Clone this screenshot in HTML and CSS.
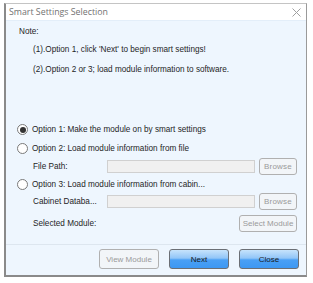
FILE: index.html
```html
<!DOCTYPE html>
<html lang="en">
<head>
    <meta charset="UTF-8">
    <title>Smart Settings Selection</title>
    <link rel="stylesheet" href="styles.css">
</head>
<body>
    <div class="dialog">
        <div class="title-bar">
            <span class="title">Smart Settings Selection</span>
            <svg class="close-icon" width="9" height="9" viewBox="0 0 9 9">
                <path d="M0.5 0.5 L8.5 8.5 M8.5 0.5 L0.5 8.5" stroke="#a0a0a0" stroke-width="1" fill="none"/>
            </svg>
        </div>

        <div class="content">
            <div class="note">Note:</div>
            <div class="note-line first">(1).Option 1, click 'Next' to begin smart settings!</div>
            <div class="note-line second">(2).Option 2 or 3; load module information to software.</div>

            <div class="options">
                <div class="row opt1">
                    <span class="radio checked"></span>
                    <span>Option 1: Make the module on by smart settings</span>
                </div>
                <div class="row opt2">
                    <span class="radio"></span>
                    <span>Option 2: Load module information from file</span>
                </div>
                <div class="row sub file-row">
                    <span class="label">File Path:</span>
                    <span class="field"></span>
                    <button class="btn-disabled browse">Browse</button>
                </div>
                <div class="row opt3">
                    <span class="radio"></span>
                    <span>Option 3: Load module information from cabin...</span>
                </div>
                <div class="row sub cabinet-row">
                    <span class="label">Cabinet Databa...</span>
                    <span class="field"></span>
                    <button class="btn-disabled browse">Browse</button>
                </div>
                <div class="row sub module-row">
                    <span class="label">Selected Module:</span>
                    <button class="btn-disabled select-module">Select Module</button>
                </div>
            </div>
        </div>

        <div class="footer">
            <button class="btn-disabled view-module">View Module</button>
            <button class="btn-blue">Next</button>
            <button class="btn-blue">Close</button>
        </div>
    </div>
</body>
</html>
```

FILE: styles.css
```css
* {
    box-sizing: border-box;
    margin: 0;
    padding: 0;
}

body {
    background: #ffffff;
    font-family: "Liberation Sans", Arial, sans-serif;
    font-size: 8.2px;
    color: #1e1e1e;
    padding: 3px 0 0 4px;
}

.dialog {
    width: 303px;
    height: 274px;
    border-top: 1px solid #c4c4c4;
    border-left: 2px solid #8a8a8a;
    border-right: 1px solid #9a9a9a;
    border-bottom: 2px solid #8a8a8a;
    background: #eef6fe;
    display: flex;
    flex-direction: column;
}

.title-bar {
    height: 17px;
    background: #ffffff;
    display: flex;
    align-items: center;
    justify-content: space-between;
    padding: 0 5px 0 3px;
    border-bottom: 1px solid #e3eef9;
}

.title {
    font-family: "Open Sans", "Liberation Sans", sans-serif;
    font-size: 8.8px;
    color: #727272;
}

.close-icon {
    display: block;
}

.content {
    height: 224px;
    padding: 2px 0 0 13px;
    border-bottom: 1px solid #dde6ef;
}

.note {
    height: 18px;
    line-height: 18px;
}

.note-line {
    height: 17px;
    line-height: 17px;
    padding-left: 14px;
}

.note-line.second {
    margin-top: 3px;
}

.options {
    margin-top: 42px;
}

.row {
    display: flex;
    align-items: center;
}

.opt1 { height: 19px; }
.opt2 { height: 18px; }
.opt3 { height: 17px; }

.sub {
    padding-left: 14px;
}

.file-row { height: 19px; }
.cabinet-row { height: 17px; }
.module-row {
    height: 17px;
    margin-top: 5px;
}

.radio {
    width: 11px;
    height: 11px;
    border: 1px solid #7a7a7a;
    border-radius: 50%;
    background: #ffffff;
    margin-left: -2px;
    margin-right: 4px;
    display: flex;
    align-items: center;
    justify-content: center;
}

.radio.checked::after {
    content: "";
    width: 6px;
    height: 6px;
    border-radius: 50%;
    background: #333;
}

.label {
    width: 74px;
}

.field {
    width: 148px;
    height: 13px;
    background: #f0f0f0;
    border: 1px solid #d0d0d0;
}

button {
    font-family: "Liberation Sans", Arial, sans-serif;
    font-size: 8px;
    cursor: default;
}

.btn-disabled {
    background: #f2f5f8;
    color: #9a9a9a;
    border: 1px solid #b0b0b0;
    border-radius: 3px;
}

.browse {
    width: 38px;
    height: 17px;
    margin-left: 4px;
    letter-spacing: 0.2px;
}

.select-module {
    width: 58px;
    height: 17px;
    margin-left: 132px;
}

.footer {
    flex: 1;
    display: flex;
    justify-content: flex-end;
    align-items: flex-start;
    gap: 10px;
    padding: 4px 7px 0 0;
}

.view-module {
    width: 60px;
    height: 20px;
}

.btn-blue {
    width: 60px;
    height: 20px;
    border: 1px solid #6b6f75;
    border-radius: 3px;
    color: #1a1a1a;
    background: linear-gradient(to bottom, #c7e3fc 0%, #92c6f8 45%, #4aa0f5 55%, #3d98f3 100%);
}
```
